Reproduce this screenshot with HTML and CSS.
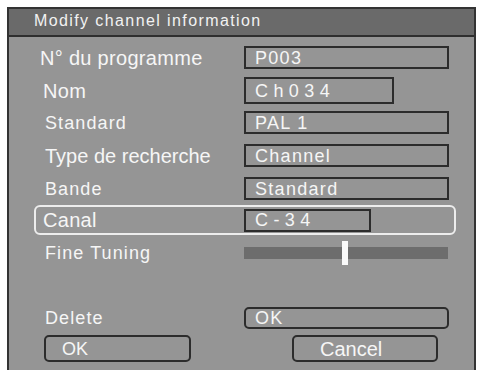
FILE: index.html
```html
<!DOCTYPE html>
<html>
<head>
<meta charset="utf-8">
<link rel="stylesheet" href="styles.css">
</head>
<body>
<div class="dialog">
  <div class="title">Modify channel information</div>
  <div class="content">
    <div class="row r1">
      <span class="label big shift-l">N° du programme</span>
      <span class="field full">P003</span>
    </div>
    <div class="row r2">
      <span class="label big">Nom</span>
      <span class="field mid spaced">C h 0 3 4</span>
    </div>
    <div class="row r3">
      <span class="label small">Standard</span>
      <span class="field full">PAL 1</span>
    </div>
    <div class="row r4">
      <span class="label big shift-r">Type de recherche</span>
      <span class="field full">Channel</span>
    </div>
    <div class="row r5">
      <span class="label small">Bande</span>
      <span class="field full">Standard</span>
    </div>
    <div class="row r6 selected">
      <span class="label big">Canal</span>
      <span class="field short spaced">C - 3 4</span>
    </div>
    <div class="row r7">
      <span class="label small">Fine Tuning</span>
      <div class="slider"><div class="knob"></div></div>
    </div>
    <div class="row r8">
      <span class="label small">Delete</span>
      <span class="field full rounded">OK</span>
    </div>
    <div class="buttons">
      <span class="btn ok">OK</span>
      <span class="btn cancel">Cancel</span>
    </div>
  </div>
</div>
</body>
</html>
```
FILE: styles.css
```css
html, body {
  margin: 0;
  padding: 0;
  background: #ffffff;
  overflow: hidden;
}
body {
  width: 479px;
  height: 370px;
  font-family: "Liberation Sans", Arial, sans-serif;
  color: #f6f6f6;
}
.dialog {
  margin: 7px 0 0 7px;
  width: 469px;
  box-sizing: border-box;
  border: 2px solid #333333;
  border-bottom: none;
  background: #959595;
}
.title {
  height: 28px;
  box-sizing: border-box;
  padding: 2px 0 0 25px;
  line-height: 20px;
  font-size: 16px;
  letter-spacing: 1.4px;
  background: #6a6a6a;
  border-bottom: 2px solid #2e2e2e;
  color: #f2f2f2;
}
.content {
  display: flex;
  flex-direction: column;
  padding: 0 0 12px 0;
}
.row {
  display: flex;
  align-items: center;
  padding-left: 34px;
  box-sizing: border-box;
}
.label {
  width: 201px;
  flex: none;
  white-space: nowrap;
  line-height: 1;
}
.big { font-size: 20px; letter-spacing: 0.3px; }
.small { font-size: 18px; letter-spacing: 1.1px; padding-left: 2px; box-sizing: border-box; }
.shift-l { margin-left: -3px; width: 204px; }
.shift-r { padding-left: 2px; box-sizing: border-box; letter-spacing: 0; }
.field {
  box-sizing: border-box;
  height: 100%;
  border: 2px solid #2c2c2c;
  padding-left: 9px;
  font-size: 18px;
  letter-spacing: 1.3px;
  display: flex;
  align-items: center;
  line-height: 1;
}
.field.full { width: 205px; }
.field.mid { width: 150px; }
.field.short { width: 127px; }
.field.spaced { letter-spacing: 0.2px; }
.field.rounded { border-radius: 5px; }

.r1 { margin-top: 9px; height: 23px; }
.r2 { margin-top: 8px; height: 27px; }
.r3 { margin-top: 7px; height: 23px; }
.r4 { margin-top: 10px; height: 23px; }
.r5 { margin-top: 10px; height: 23px; }
.r6 {
  margin-top: 5px;
  height: 30px;
  margin-left: 25px;
  width: 422px;
  padding: 2px 0 2px 7px;
  border: 2px solid #ededed;
  border-radius: 6px;
}
.r6 .field { height: 23px; }
.r7 { margin-top: 6px; height: 24px; }
.r8 { margin-top: 42px; height: 22px; }

.slider {
  position: relative;
  width: 204px;
  height: 12px;
  background: #6d6d6d;
}
.knob {
  position: absolute;
  left: 98px;
  top: -6px;
  width: 6px;
  height: 24px;
  background: #fafafa;
}
.buttons {
  display: flex;
  margin-top: 6px;
  padding-left: 35px;
  gap: 101px;
}
.btn {
  box-sizing: border-box;
  height: 27px;
  border: 2px solid #2c2c2c;
  border-radius: 5px;
  display: flex;
  align-items: center;
  line-height: 1;
}
.btn.ok { width: 147px; padding-left: 16px; font-size: 18px; }
.btn.cancel { width: 146px; padding-left: 26px; font-size: 20px; }
```
